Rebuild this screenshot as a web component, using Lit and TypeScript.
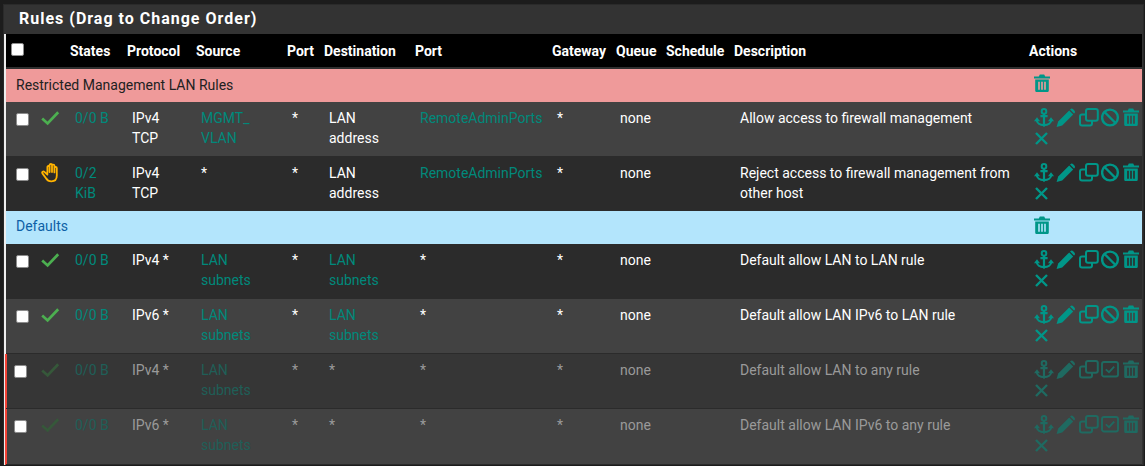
import { LitElement, html, css, svg } from "lit";
import { customElement } from "lit/decorators.js";

const anchor = svg`<circle cx="10" cy="3.4" r="2.3" fill="none" stroke="currentColor" stroke-width="2"/><path d="M10 5.6V17.5M6.4 8.2H13.6" fill="none" stroke="currentColor" stroke-width="2.2"/><path d="M2.6 11.5C2.8 15 6 17.2 10 17.2C14 17.2 17.2 15 17.4 11.5" fill="none" stroke="currentColor" stroke-width="2.2"/><path d="M0 13.2L3 9.2L6 13.2ZM14 13.2L17 9.2L20 13.2Z" fill="currentColor"/><path d="M8 17.2L10 19L12 17.2Z" fill="currentColor"/>`;
const pencil = svg`<path d="M13.2 2.4L17.2 6.4L6.2 17.4L.6 19L2.2 13.4Z" fill="currentColor"/><path d="M14.4 1.2C15.2 .4 16.4 .4 17.2 1.2L18.4 2.4C19.2 3.2 19.2 4.4 18.4 5.2L18 5.6L14 1.6Z" fill="currentColor"/>`;
const clone = svg`<rect x="7" y="1" width="11.8" height="11.8" rx="2" fill="none" stroke="currentColor" stroke-width="2"/><path d="M7 6.5H3C1.9 6.5 1 7.4 1 8.5V15.5C1 16.6 1.9 17.5 3 17.5H11C12.1 17.5 13 16.6 13 15.5V12.8" fill="none" stroke="currentColor" stroke-width="2"/>`;
const ban = svg`<circle cx="9" cy="9.5" r="7.9" fill="none" stroke="currentColor" stroke-width="2.4"/><path d="M3.5 4L14.5 15" stroke="currentColor" stroke-width="2.4"/>`;
const checkSq = svg`<rect x="1" y="2" width="16" height="14.5" rx="2" fill="none" stroke="currentColor" stroke-width="1.9"/><path d="M4.8 9.4L8 12.2L13.2 6.6" fill="none" stroke="currentColor" stroke-width="1.8"/>`;
const trash = svg`<path d="M0 2.6H4.8L5.8 .6H10.2L11.2 2.6H16V4.6H0Z" fill="currentColor"/><path fill-rule="evenodd" d="M1.2 5.6H14.8V16.4C14.8 17.4 14 18 13.2 18H2.8C2 18 1.2 17.4 1.2 16.4ZM4.2 7.8V15.8H5.8V7.8ZM7.2 7.8V15.8H8.8V7.8ZM10.2 7.8V15.8H11.8V7.8Z" fill="currentColor"/>`;
const times = svg`<path d="M2 5L13 16M13 5L2 16" stroke="currentColor" stroke-width="2.4" fill="none"/>`;
const check = svg`<path d="M1.2 10.5L6.6 15.4L17.2 4.2" fill="none" stroke="currentColor" stroke-width="2.7"/>`;
const hand = svg`<path d="M6.4 10.5V4C6.4 2.5 8.6 2.5 8.6 4V9M8.6 9V2C8.6 .6 11 .6 11 2V9M11 9V2.6C11 1.2 13.4 1.2 13.4 2.6V9.4M13.4 9.4V5C13.4 3.6 15.8 3.6 15.8 5V12.6C15.8 16.4 13.4 18.4 10.4 18.4C7.6 18.4 6 17 4.8 15L1.4 10.4C.6 9 2.2 7.8 3.4 8.9L6.4 11.6" fill="none" stroke="currentColor" stroke-width="1.8" stroke-linecap="round" stroke-linejoin="round"/>`;

interface Rule {
  tone: "odd" | "even" | "off-a" | "off-b";
  status: "check" | "hand";
  states: string;
  proto: string;
  source: string;
  sport: string;
  dest: string;
  dlink: boolean;
  dport: string;
  desc: string;
}

const A: Rule[] = [
  { tone: "odd", status: "check", states: "0/0 B", proto: "IPv4 TCP", source: "MGMT_ VLAN", sport: "*", dest: "LAN address", dlink: false, dport: "RemoteAdminPorts", desc: "Allow access to firewall management" },
  { tone: "even", status: "hand", states: "0/2 KiB", proto: "IPv4 TCP", source: "*", sport: "*", dest: "LAN address", dlink: false, dport: "RemoteAdminPorts", desc: "Reject access to firewall management from other host" },
];
const B: Rule[] = [
  { tone: "even", status: "check", states: "0/0 B", proto: "IPv4 *", source: "LAN subnets", sport: "*", dest: "LAN subnets", dlink: true, dport: "*", desc: "Default allow LAN to LAN rule" },
  { tone: "odd", status: "check", states: "0/0 B", proto: "IPv6 *", source: "LAN subnets", sport: "*", dest: "LAN subnets", dlink: true, dport: "*", desc: "Default allow LAN IPv6 to LAN rule" },
  { tone: "off-a", status: "check", states: "0/0 B", proto: "IPv4 *", source: "LAN subnets", sport: "*", dest: "*", dlink: false, dport: "*", desc: "Default allow LAN to any rule" },
  { tone: "off-b", status: "check", states: "0/0 B", proto: "IPv6 *", source: "LAN subnets", sport: "*", dest: "*", dlink: false, dport: "*", desc: "Default allow LAN IPv6 to any rule" },
];

const ic = (p: unknown, cls = "") => html`<svg class="ic ${cls}" viewBox="0 0 20 20">${p}</svg>`;

@customElement("app-root")
export class AppRoot extends LitElement {
  static styles = css`
    :host { display: block; width: 1145px; height: 466px; overflow: hidden; background: #1c1c1c; font-family: Roboto, sans-serif; font-size: 14px; line-height: 20px; color: #fff; }
    .panel { margin: 4px 1px 0 3px; background: #333; border: 1px solid #2a2a2a; border-bottom: 0; }
    .title { height: 29px; box-sizing: border-box; padding-left: 15px; font-size: 16px; font-weight: 700; line-height: 27px; letter-spacing: 1px; color: #fff; background: #333; }
    .wrap { border-left: 2px solid #eee; }
    table { table-layout: fixed; width: 1136px; border-collapse: separate; border-spacing: 0; }
    th { background: #000; height: 35px; box-sizing: border-box; padding: 0; text-align: left; font-size: 14px; font-weight: 700; line-height: 20px; color: #fff; border-bottom: 2px solid #2f2f2f; vertical-align: middle; white-space: nowrap; }
    td { padding: 6px 12px 8px 5px; vertical-align: top; border-bottom: 1px solid #2b2b2b; }
    tr.short td { padding-bottom: 7px; }
    tr.tail td { padding-bottom: 9px; }
    th.box { padding-left: 5px; vertical-align: top; padding-top: 9px; }
    .cb { display: block; width: 13px; height: 13px; box-sizing: border-box; margin: 0; background: #fff; border: 1px solid #8c8c8c; border-radius: 2px; }
    td.box, tr.short td.box, tr.tail td.box { padding: 11px 0 0 10px; }
    tr.off td.box { padding-left: 8px; box-shadow: -1px 0 0 #f44336, inset 1px 0 0 #f44336; }
    tr.odd td { background: #424242; }
    tr.even td { background: #2b2b2b; }
    tr.off-a td { background: #363636; }
    tr.off-b td { background: #424242; }
    tr.sep td { height: 33px; box-sizing: border-box; padding: 6px 0 5px 10px; font-size: 14px; border-bottom: 0; }
    tr.sep.blue td { padding-top: 5px; }
    tr.sep td.last { padding: 5px 0 0 5px; }
    tr.red td { background: #ef9a9a; color: #212121; }
    tr.blue td { background: #b3e5fc; color: #0d5fa6; }
    .teal { color: #00897b; }
    .off .teal { color: #1f5f58; }
    .off .txt { color: #9a9a9a; }
    .txt { color: #fff; }
    td.st { padding-right: 0; }
    td.nw { white-space: nowrap; padding-right: 0; }
    td.q { padding-left: 4px; }
    td.d { padding-left: 6px; }
    td.last { padding-right: 0; }
    .ic { display: block; flex: none; width: 20px; height: 20px; }
    .acts { display: flex; flex-wrap: wrap; gap: 0 2.3px; width: 110px; color: #009688; }
    .off .acts { color: #1f6a61; }
    .sep .ic { color: #009688; }
    .green { color: #4caf50; }
    .off .green { color: #36583a; }
    .amber { color: #ffb300; }
  `;

  private row(r: Rule, extra = "") {
    const off = r.tone.startsWith("off");
    return html`<tr class="${r.tone} ${off ? "off" : ""} ${extra}">
      <td class="box"><span class="cb"></span></td>
      <td class="st">${r.status === "check" ? ic(check, "green") : ic(hand, "amber")}</td>
      <td class="teal">${r.states}</td>
      <td class="txt">${r.proto}</td>
      <td class="${r.source === "*" ? "txt" : "teal"}">${r.source}</td>
      <td class="txt">${r.sport}</td>
      <td class="${r.dlink ? "teal" : "txt"}">${r.dest}</td>
      <td class="${r.dport === "*" ? "txt" : "teal nw"}">${r.dport}</td>
      <td class="txt">*</td>
      <td class="txt q">none</td>
      <td></td>
      <td class="txt d">${r.desc}</td>
      <td class="last"><div class="acts">${ic(anchor)}${ic(pencil)}${ic(clone)}${off ? ic(checkSq) : ic(ban)}${ic(trash)}${ic(times)}</div></td>
    </tr>`;
  }

  private sep(cls: string, label: string) {
    return html`<tr class="sep ${cls}"><td colspan="12">${label}</td><td class="last">${ic(trash)}</td></tr>`;
  }

  render() {
    const heads = ["States", "Protocol", "Source", "Port", "Destination", "Port", "Gateway", "Queue", "Schedule", "Description", "Actions"];
    const widths = [30, 34, 57, 69, 91, 37, 91, 137, 64, 50, 68, 295, 113];
    const extrasA = ["", "short"];
    const extrasB = ["", "", "", "tail"];
    return html`<div class="panel">
      <div class="title">Rules (Drag to Change Order)</div>
      <div class="wrap"><table>
        <colgroup>${widths.map((w) => html`<col style="width:${w}px" />`)}</colgroup>
        <thead><tr><th class="box"><span class="cb"></span></th><th></th>${heads.map((h) => html`<th>${h}</th>`)}</tr></thead>
        <tbody>
          ${this.sep("red", "Restricted Management LAN Rules")}
          ${A.map((r, i) => this.row(r, extrasA[i]))}
          ${this.sep("blue", "Defaults")}
          ${B.map((r, i) => this.row(r, extrasB[i]))}
        </tbody>
      </table></div>
    </div>`;
  }
}
